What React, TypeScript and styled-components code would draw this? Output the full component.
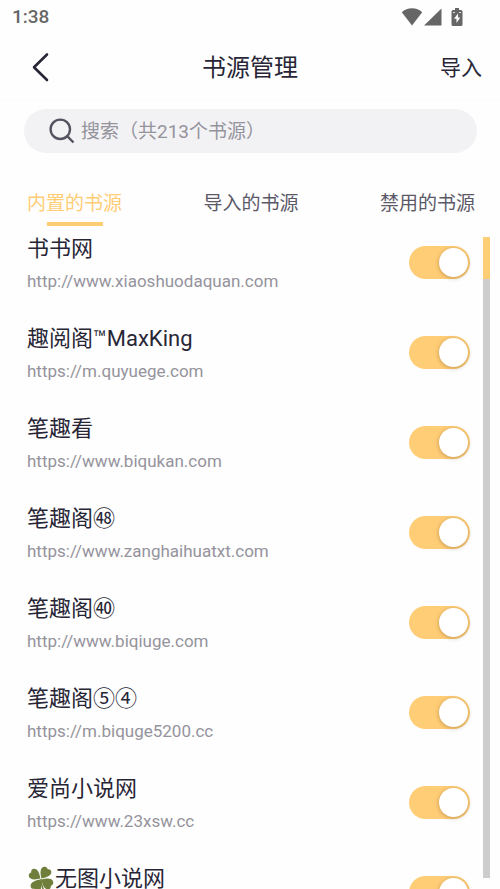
import React, { useState } from "react";
import styled, { createGlobalStyle } from "styled-components";

const ink = "#282636";
const accent = "#ffcd76";
const muted = "#95939c";

const GlobalStyle = createGlobalStyle`
  * { box-sizing: border-box; }
  body {
    margin: 0;
    background: #fefefe;
    color: ${ink};
    font-family: Roboto, "Noto Sans CJK SC", sans-serif;
  }
  button, input { font: inherit; color: inherit; }
  button { border: 0; padding: 0; background: none; cursor: pointer; }
`;

const Page = styled.div`
  display: flex;
  flex-direction: column;
  height: 100vh;
  overflow: hidden;
`;

const StatusBar = styled.div`
  display: flex;
  align-items: center;
  justify-content: space-between;
  height: 34px;
  padding: 0 37px 0 12px;
  color: #666;
  font-size: 19px;
  font-weight: 500;
  line-height: 24px;
`;

const StatusIcons = styled.div`
  display: flex;
  align-items: center;
`;

const Header = styled.header`
  display: grid;
  grid-template-columns: 1fr auto 1fr;
  align-items: center;
  height: 67px;
  padding: 0 18px;
  border-bottom: 1px solid #fbfbfb;
`;

const Title = styled.h1`
  margin: 0;
  padding-top: 2px;
  font-size: 24px;
  font-weight: 400;
  line-height: 32px;
`;

const BackButton = styled.button`
  justify-self: start;
  display: flex;
  padding-left: 12px;
`;

const ImportButton = styled.button`
  justify-self: end;
  padding-top: 2px;
  font-size: 21px;
  line-height: 32px;
`;

const SearchBox = styled.label`
  display: flex;
  align-items: center;
  gap: 5px;
  flex: none;
  height: 44px;
  margin: 8px 23px 0 24px;
  padding: 0 24px;
  border-radius: 22px;
  background: #f2f2f5;
`;

const SearchInput = styled.input`
  flex: 1;
  min-width: 0;
  border: 0;
  padding: 2px 0 0;
  outline: none;
  background: transparent;
  font-size: 19px;
  line-height: 32px;
  &::placeholder { color: ${muted}; opacity: 1; }
`;

const Tabs = styled.nav`
  display: flex;
  justify-content: space-between;
  flex: none;
  margin-top: 35px;
  padding: 0 25px 0 27px;
`;

const Tab = styled.button<{ $active: boolean }>`
  display: flex;
  flex-direction: column;
  align-items: center;
  height: 39px;
  color: ${(p) => (p.$active ? accent : "#5b5968")};
  font-size: 19px;
  line-height: 32px;
  &::after {
    content: "";
    width: 56px;
    height: 4px;
    margin-top: 2px;
    background: ${(p) => (p.$active ? accent : "transparent")};
  }
`;

const Body = styled.main`
  display: flex;
  flex: 1;
  min-height: 0;
`;

const SourceList = styled.ul`
  display: flex;
  flex: 1;
  flex-direction: column;
  gap: 20px;
  min-width: 0;
  margin: 0;
  padding: 0 13px 0 27px;
  overflow: hidden;
  list-style: none;
`;

const SourceRow = styled.li`
  display: flex;
  align-items: center;
  justify-content: space-between;
  flex: none;
  height: 70px;
`;

const SourceLabel = styled.label`
  display: flex;
  flex-direction: column;
  align-self: flex-start;
  gap: 4px;
  padding-top: 6px;
`;

const SourceName = styled.span`
  display: flex;
  align-items: center;
  font-size: 22px;
  line-height: 32px;
`;

const SourceUrl = styled.span`
  color: ${muted};
  font-size: 17px;
  line-height: 24px;
`;

const Toggle = styled.input`
  appearance: none;
  display: flex;
  align-items: center;
  flex: none;
  width: 61px;
  height: 33px;
  margin: 0;
  padding: 0 2px;
  border-radius: 17px;
  background: #d8d8dc;
  cursor: pointer;
  &::after {
    content: "";
    width: 29px;
    height: 29px;
    border-radius: 50%;
    background: #fff;
    box-shadow: 0 1px 4px rgba(80, 50, 0, 0.35);
  }
  &:checked {
    justify-content: flex-end;
    background: ${accent};
  }
`;

const ScrollTrack = styled.div`
  flex: none;
  width: 7px;
  margin: 10px 10px 11px 0;
  background: #cdcdcd;
`;

const ScrollThumb = styled.div`
  height: 42px;
  background: ${accent};
`;

const Wifi = () => (
  <svg width="22" height="18" viewBox="0 0 22 18" aria-hidden="true">
    <path d="M11 17.500.8 4.200C3.500 1.700 7 .3 11 .3s7.500 1.400 10.200 3.900Z" fill="#666" />
  </svg>
);

const Signal = () => (
  <svg width="19" height="18" viewBox="0 0 19 18" aria-hidden="true">
    <path d="M18.500.5V17.500H1Z" fill="#666" />
  </svg>
);

const Battery = () => (
  <svg width="12" height="18" viewBox="0 0 12 18" aria-hidden="true">
    <path d="M4 0h4v2h2q1.500 0 1.500 1.500V16.500Q11.500 18 10 18H2Q.5 18 .5 16.500V3.500Q.5 2 2 2h2Z" fill="#666" />
    <path d="M7 5.500 3 10.800h2.500V15L9.300 9.400H7Z" fill="#fff" />
    <path d="M2 4h2v1H2ZM8 4h2v1H8Z" fill="#ddd" />
  </svg>
);

const BatterySlot = styled.span`
  display: flex;
  margin-left: 9px;
`;

const BackIcon = () => (
  <svg width="20" height="30" viewBox="0 0 20 30" fill="none" aria-hidden="true">
    <path d="M17 2.500 4 15.200 17 28" stroke={ink} strokeWidth="2.600" strokeLinecap="round" strokeLinejoin="round" />
  </svg>
);

const SearchIcon = () => (
  <svg width="28" height="28" viewBox="0 0 28 28" fill="none" stroke="#55535f" strokeWidth="2.400" aria-hidden="true">
    <circle cx="12.300" cy="12.300" r="9.700" />
    <path d="m19.200 19.200 6.300 6.300" />
  </svg>
);

const Clover = () => (
  <svg width="28" height="28" viewBox="0 0 28 28" role="img" aria-label="四叶草">
    <g fill="#6f7f3b" transform="rotate(-10 14 14)">
      <path d="M13.500 13.500C7 14 2.500 12.500 2.500 9c0-2 1.300-3.300 3-3.200C5.500 3.500 7 2.300 9 2.600c3.300.5 4.700 4.900 4.500 10.900Z" />
      <path d="M14.500 13.500C14 7 15.500 2.500 19 2.500c2 0 3.300 1.300 3.200 3 2.300 0 3.500 1.500 3.200 3.500-.5 3.300-4.900 4.700-10.900 4.500Z" />
      <path d="M14.500 14.500C21 14 25.500 15.500 25.500 19c0 2-1.300 3.300-3 3.200 0 2.300-1.500 3.500-3.500 3.200-3.300-.5-4.700-4.900-4.500-10.900Z" />
      <path d="M13.500 14.500C14 21 12.500 25.500 9 25.500c-2 0-3.300-1.300-3.200-3-2.300 0-3.500-1.500-3.200-3.500.5-3.300 4.900-4.700 10.900-4.500Z" />
    </g>
    <path d="M14 14q0 6 3 12" stroke="#6f7f3b" strokeWidth="1.500" fill="none" />
  </svg>
);

const tabs = ["内置的书源", "导入的书源", "禁用的书源"];

const sources = [
  { name: "书书网", url: "http://www.xiaoshuodaquan.com" },
  { name: "趣阅阁™MaxKing", url: "https://m.quyuege.com" },
  { name: "笔趣看", url: "https://www.biqukan.com" },
  { name: "笔趣阁㊽", url: "https://www.zanghaihuatxt.com" },
  { name: "笔趣阁㊵", url: "http://www.biqiuge.com" },
  { name: "笔趣阁⑤④", url: "https://m.biquge5200.cc" },
  { name: "爱尚小说网", url: "https://www.23xsw.cc" },
  { name: "无图小说网", url: "", clover: true },
];

export default function App() {
  const [active, setActive] = useState(0);
  return (
    <Page>
      <GlobalStyle />
      <StatusBar>
        <span>1:38</span>
        <StatusIcons>
          <Wifi />
          <Signal />
          <BatterySlot>
            <Battery />
          </BatterySlot>
        </StatusIcons>
      </StatusBar>
      <Header>
        <BackButton aria-label="返回">
          <BackIcon />
        </BackButton>
        <Title>书源管理</Title>
        <ImportButton>导入</ImportButton>
      </Header>
      <SearchBox>
        <SearchIcon />
        <SearchInput type="text" aria-label="搜索书源" placeholder="搜索（共213个书源）" />
      </SearchBox>
      <Tabs>
        {tabs.map((t, i) => (
          <Tab key={t} $active={i === active} onClick={() => setActive(i)}>
            {t}
          </Tab>
        ))}
      </Tabs>
      <Body>
        <SourceList>
          {sources.map((s, i) => (
            <SourceRow key={s.name}>
              <SourceLabel htmlFor={`source-${i}`}>
                <SourceName>
                  {s.clover && <Clover />}
                  {s.name}
                </SourceName>
                {s.url && <SourceUrl>{s.url}</SourceUrl>}
              </SourceLabel>
              <Toggle id={`source-${i}`} type="checkbox" defaultChecked />
            </SourceRow>
          ))}
        </SourceList>
        <ScrollTrack>
          <ScrollThumb />
        </ScrollTrack>
      </Body>
    </Page>
  );
}
